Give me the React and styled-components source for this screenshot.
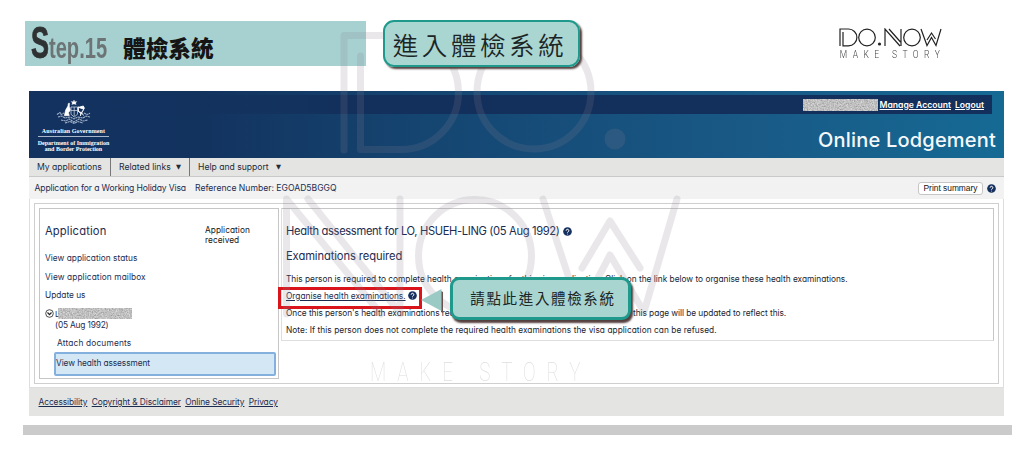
import React from 'react'
import styled, { createGlobalStyle } from 'styled-components'

const GlobalStyle = createGlobalStyle`
  * {
    box-sizing: border-box;
  }

  body {
    margin: 0;
    background: #fff;
    overflow: hidden;
  }
`

const Page = styled.div`
  position: relative;
  width: 1024px;
  height: 473px;
  overflow: hidden;
  background: #fff;
  color: #1c2c50;
  font-family: Inter, 'Noto Sans CJK TC', sans-serif;
  font-feature-settings: 'cv11';
  font-size: 8.3px;
`

/* Slide heading */

const TopBar = styled.header`
  display: flex;
  align-items: flex-start;
  height: 91px;
  padding: 20px 0 0 25px;
`

const StepTitle = styled.h1`
  display: flex;
  width: 341px;
  height: 45px;
  margin: 1px 0 0;
  padding-left: 6px;
  background: #a7d1d0;
  font-family: 'Liberation Sans', sans-serif;
  line-height: 1;
`

const StepInitial = styled.span`
  width: 18px;
  color: #2f3233;
  font-size: 45px;
  line-height: 43px;
  transform: scaleX(0.6);
  transform-origin: left;
  -webkit-text-stroke: 1px #2f3233;
`

const StepRest = styled.span`
  width: 74px;
  color: #6c7476;
  font-size: 30px;
  line-height: 53px;
  transform: scaleX(0.67);
  transform-origin: left;
`

const StepName = styled.span`
  color: #151515;
  font-family: 'Noto Sans CJK TC', sans-serif;
  font-size: 22.7px;
  font-weight: 900;
  line-height: 53px;
`

const Callout = styled.div`
  display: flex;
  align-items: center;
  justify-content: center;
  border: 2px solid #1f998c;
  background: #a9d5d1;
  color: #1b2526;
  font-family: 'Noto Sans CJK TC', sans-serif;
  white-space: nowrap;
`

const TitleCallout = styled(Callout)`
  position: relative;
  z-index: 1;
  width: 197px;
  height: 47px;
  margin-left: 17px;
  padding-right: 3px;
  border-radius: 11px;
  background: rgba(167, 212, 207, 0.96);
  box-shadow: 2px 2px 2px #54403f;
  font-size: 25.5px;
  font-weight: 350;
  letter-spacing: 3.6px;
`

const Brand = styled.div`
  width: 104px;
  margin: 8px 0 0 258.5px;

  svg {
    display: block;
  }
`

const BrandTag = styled.div`
  margin-top: 1px;
  padding-left: 1px;
  color: #444;
  font-family: Roboto, sans-serif;
  font-size: 10.5px;
  font-weight: 300;
  line-height: 12px;
  letter-spacing: 6.7px;
  white-space: nowrap;
  transform: scaleX(0.81);
  transform-origin: left;
`

/* Lodgement portal */

const Portal = styled.div`
  width: 975px;
  height: 325px;
  margin-left: 29px;
`

const Banner = styled.div`
  display: flex;
  height: 67px;
  background: linear-gradient(90deg, #13325f 0%, #13335f 18%, #154672 42%, #195a87 75%, #156a94 100%);
`

const Emblem = styled.div`
  display: flex;
  flex-direction: column;
  align-items: center;
  width: 89px;
  padding-top: 8px;
  color: #fff;
  font-family: 'Liberation Serif', serif;
  font-weight: 700;
  font-size: 6px;
  line-height: 6px;
  text-align: center;
  white-space: nowrap;

  hr {
    width: 71px;
    height: 1px;
    margin: 2px 0 3px;
    border: 0;
    background: #a9b7cc;
  }
`

const EmblemName = styled.div`
  margin-top: 2px;
  letter-spacing: 0.1px;
`

const BannerMain = styled.div`
  flex: 1;
  display: flex;
  flex-direction: column;
  padding-top: 4px;
`

const AccountBar = styled.div`
  display: flex;
  align-items: center;
  justify-content: flex-end;
  height: 19px;
  margin-right: 12px;
  padding-right: 8px;
  background: linear-gradient(90deg, rgba(19, 48, 92, 0), #13305c 25%);
`

const AccountLink = styled.a`
  margin-left: ${p => p.$gap}px;
  color: #fff;
  font-size: 8.6px;
  font-weight: 600;
  line-height: 10px;
  text-decoration: underline;
`

const ServiceName = styled.div`
  padding: 10px 8px 0 0;
  color: #f5f8fa;
  font-size: 20px;
  font-weight: 500;
  line-height: 32px;
  letter-spacing: 0.2px;
  text-align: right;
`

const Menu = styled.nav`
  display: flex;
  height: 19px;
  border-bottom: 1px solid #c9c9c9;
  background: #e4e4e2;
`

const MenuItem = styled.div`
  display: flex;
  justify-content: space-between;
  width: ${p => p.$width}px;
  padding: 0 8px;
  border-right: ${p => (p.$last ? '0' : '1px solid #777')};
  color: #222b3b;
  font-size: 8.6px;
  line-height: 18px;
  white-space: nowrap;

  i {
    font-family: 'DejaVu Sans', sans-serif;
    font-size: 6.5px;
    font-style: normal;
    line-height: 19px;
  }
`

const Reference = styled.div`
  display: flex;
  align-items: center;
  height: 22px;
  padding: 0 8px 0 5.5px;
  background: #f2f2f2;
  font-size: 8.6px;
  white-space: nowrap;
`

const RefText = styled.span`
  width: ${p => p.$width}px;
  letter-spacing: ${p => p.$track || 0}px;
`

const PrintButton = styled.button`
  width: 65px;
  height: 13px;
  margin: 0 4px 0 auto;
  padding: 0;
  border: 1px solid #c6c6c6;
  border-radius: 3px;
  background: #fff;
  color: #111;
  font-family: 'Liberation Sans', sans-serif;
  font-size: 8.4px;
  line-height: 11px;
`

const Content = styled.div`
  height: 189px;
  padding: 4px 4px 0;
  border: solid #dedede;
  border-width: 0 1px 1px;
`

const Frame = styled.div`
  display: flex;
  height: 181px;
  padding: 4px;
  border: 1px solid #cfcfcf;
`

const Sidebar = styled.aside`
  width: 240px;
  height: 171px;
  padding: 12px 2px 0 5px;
  border: 1px solid #c6c6c6;
`

const SideHead = styled.div`
  display: flex;
  height: 28px;
`

const Heading = styled.h2`
  margin: 0;
  font-size: 11.2px;
  font-weight: 400;
  line-height: 20px;
  letter-spacing: ${p => p.$track || 0}px;
  white-space: nowrap;
`

const Status = styled.div`
  width: 71px;
  margin-left: auto;
  padding: 4px 0 0;
  color: #151515;
  line-height: 10.3px;
  letter-spacing: 0.05px;
`

const SideLink = styled.div`
  height: ${p => p.$height || 18.7}px;
  padding-left: ${p => p.$indent || 0}px;
  line-height: ${p => p.$height || 18.7}px;
  letter-spacing: ${p => p.$track || 0}px;
  white-space: nowrap;
`

const Person = styled.div`
  display: flex;
  align-items: center;
  height: 17px;

  svg {
    flex: none;
  }

  span {
    width: 3px;
    margin-left: 1px;
    font-size: 8px;
    letter-spacing: -1px;
  }
`

const Selected = styled.div`
  width: 222px;
  height: 24px;
  margin: -5px 0 0 9px;
  border: 2px solid #83b0dd;
  border-radius: 2px;
  background: #d3e8f4;
  line-height: 19px;
  letter-spacing: -0.08px;
`

const Detail = styled.main`
  width: 714px;
  height: 133px;
  margin-left: 2px;
  padding: 12px 0 0 4px;
  border: 1px solid #c6c6c6;
  border-bottom-color: #dedede;
  border-left-color: #dedede;
`

const DetailLine = styled.p`
  display: flex;
  align-items: center;
  height: 17.2px;
  margin: 0;
  color: #20242f;
  letter-spacing: ${p => p.$track || 0}px;
  white-space: nowrap;

  a {
    color: #1c2c50;
    text-decoration: underline;
  }
`

const TitleLine = styled.div`
  display: flex;
  align-items: center;
  gap: 3px;
  height: ${p => p.$height}px;
`

const Footer = styled.footer`
  display: flex;
  align-items: center;
  gap: 4.3px;
  height: 28px;
  padding-left: 9.5px;
  background: #e4e4e2;
  font-size: 8.4px;
  letter-spacing: -0.08px;

  a {
    text-decoration: underline;
    white-space: nowrap;
  }
`

const BottomRule = styled.div`
  width: 989px;
  height: 10px;
  margin: 9px 0 0 23px;
  background: #cbcbcb;
`

/* Annotations laid over the portal */

const Watermark = styled.div`
  position: absolute;
  inset: 0;
  pointer-events: none;
`

const WatermarkTag = styled.div`
  position: absolute;
  top: 359px;
  left: 370px;
  color: #dedede;
  font-family: Roboto, sans-serif;
  font-size: 26px;
  font-weight: 100;
  line-height: 26px;
  letter-spacing: 15px;
  white-space: nowrap;
  transform: scaleX(0.725);
  transform-origin: left;
`

const RedBox = styled.div`
  position: absolute;
  top: 287px;
  left: 278px;
  width: 144px;
  height: 22px;
  border: 3px solid #d9141b;
`

const Pointer = styled.svg`
  position: absolute;
  top: 286px;
  left: 418px;
`

const LinkCallout = styled(Callout)`
  position: absolute;
  top: 277px;
  left: 450px;
  width: 181px;
  height: 43px;
  padding: 0 0 2px 5px;
  border-width: 3px;
  border-radius: 9px;
  box-shadow: 2px 3px 2px #54403f;
  font-size: 14.5px;
  letter-spacing: 1.65px;
`

const Help = ({ size = 9 }) => (
  <svg width={size} height={size} viewBox='0 0 10 10'>
    <circle cx='5' cy='5' r='4.8' fill='#16305f' />
    <path d='M3.5 4.1a1.5 1.5 0 1 1 2.3 1.2q-.8.4-.8 1.1M5 7.5v.7' fill='none' stroke='#fff' strokeWidth='1.1' />
  </svg>
)

const Redacted = ({ width, height }) => (
  <svg width={width} height={height}>
    <filter id={`grain${width}`} x='0' y='0' width='100%' height='100%' colorInterpolationFilters='sRGB'>
      <feTurbulence type='fractalNoise' baseFrequency='0.7' numOctaves='2' seed='4' />
      <feColorMatrix values='.4 0 0 0 .55  .4 0 0 0 .55  .4 0 0 0 .55  0 0 0 0 1' />
    </filter>
    <rect width={width} height={height} filter={`url(#grain${width})`} />
  </svg>
)

const Crest = () => (
  <svg width='36' height='27' viewBox='0 0 36 27' fill='none' stroke='#fff'>
    <path d='M18 1l.8 1.8 2-.3-1.2 1.6.6 1.5-2.2-.7-2.2.7.6-1.5-1.2-1.6 2 .3z' fill='#fff' strokeWidth='.3' />
    <path d='M13.5 4.2l-1.2.2-.4 2.7-2.3 4-1.3 5.6h5l-.8-3 2-2.8-1.2-3.6z' fill='#fff' strokeWidth='.6' />
    <path d='M28.5 9.5l-1.2-2.5-3.6 1-2 .2.3 4 2.7 1.8-.2 3M25.5 13.5l2 3M22.3 8.2l5.4 2-2.2 3.5-3-1.2z' fill='#fff' strokeWidth='.9' />
    <path d='M15 8h6.5v7.3L18.2 18 15 15.3zM15 11.5h6.5M18.2 8v9' stroke='#c6d0df' strokeWidth='.8' />
    <path d='M1 15.5l3-2 1 2 3-1.5M2 18l4-1 3 2 5-1 4 2 4-2 5 1 3-2 4 1M28 14l3 1.5 3-1.2M5 21l5 1 3-2 5 3 5-3 4 2 5-1M9 24l5-1.5 4 2 4-2 5 1.5' stroke='#a2b2c9' strokeWidth='1.1' strokeDasharray='2.2 .5' />
  </svg>
)

const BrandMark = () => (
  <svg width='103' height='20' viewBox='0 0 103 20' fill='none' stroke='#222' strokeWidth='1.2' role='img' aria-label='DO.NOW'>
    <path d='M1 18V1H9.5a8.3 8.3 0 0 1 0 16.8H4V4' />
    <circle cx='28' cy='9.5' r='8.3' />
    <circle cx='40.5' cy='16' r='1.6' fill='#222' stroke='none' />
    <path d='M46 18V1L61 18M50 1L61.5 14M62 1V18' />
    <circle cx='73' cy='9.5' r='8.3' />
    <path d='M82 1L88 17.5 92.5 9.5 97 17.5 102 1M88 12L92.5 5 96.5 11' />
  </svg>
)

/* Same monogram, split over two rows */
const WatermarkMark = () => (
  <svg
    width='1024'
    height='473'
    fill='none'
    stroke='#898091'
    strokeWidth='7'
    strokeLinecap='round'
    strokeLinejoin='round'
    opacity='0.18'
  >
    <path d='M344 150V35.5H401.5a57 57 0 0 1 0 114H360.5V56' />
    <circle cx='534' cy='92' r='57' />
    <circle cx='615' cy='139' r='10.5' fill='#898091' stroke='none' />
    <path d='M286.5 314V199L381 314M308 199L400 313M400 199V314' />
    <circle cx='475' cy='256' r='56.5' />
    <path d='M543 199L580 312 610 255 644 312 677 199M582 268L610 221 640 268' />
  </svg>
)

const App = () => {
  return (
    <Page>
      <GlobalStyle />
      <TopBar>
        <StepTitle>
          <StepInitial>S</StepInitial>
          <StepRest>tep.15</StepRest>
          <StepName>體檢系統</StepName>
        </StepTitle>
        <TitleCallout>進入體檢系統</TitleCallout>
        <Brand>
          <BrandMark />
          <BrandTag>MAKE STORY</BrandTag>
        </Brand>
      </TopBar>

      <Portal>
        <Banner>
          <Emblem>
            <Crest />
            <EmblemName>Australian Government</EmblemName>
            <hr />
            <div>Department of Immigration</div>
            <div>and Border Protection</div>
          </Emblem>
          <BannerMain>
            <AccountBar>
              <Redacted width={75} height={12} />
              <AccountLink $gap={2}>Manage Account</AccountLink>
              <AccountLink $gap={4}>Logout</AccountLink>
            </AccountBar>
            <ServiceName>Online Lodgement</ServiceName>
          </BannerMain>
        </Banner>

        <Menu>
          <MenuItem $width={82}>My applications</MenuItem>
          <MenuItem $width={79}>Related links <i>▼</i></MenuItem>
          <MenuItem $width={99} $last>Help and support <i>▼</i></MenuItem>
        </Menu>

        <Reference>
          <RefText $width={160.5} $track={-0.15}>Application for a Working Holiday Visa</RefText>
          <RefText $width={150}>Reference Number: EGOAD5BGGQ</RefText>
          <PrintButton>Print summary</PrintButton>
          <Help />
        </Reference>

        <Content>
          <Frame>
            <Sidebar>
              <SideHead>
                <Heading $track={0.15}>Application</Heading>
                <Status>Application received</Status>
              </SideHead>
              <SideLink $track={0.03}>View application status</SideLink>
              <SideLink $track={0.1}>View application mailbox</SideLink>
              <SideLink>Update us</SideLink>
              <Person>
                <svg width='9' height='9' viewBox='0 0 9 9' fill='none' stroke='#222'>
                  <circle cx='4.5' cy='4.5' r='3.8' strokeWidth='.8' />
                  <path d='M2.5 3.5l2 2.2 2-2.2' strokeWidth='1.2' />
                </svg>
                <span>L</span>
                <Redacted width={74} height={11} />
              </Person>
              <SideLink $height={7} $indent={10} $track={-0.15}>(05 Aug 1992)</SideLink>
              <SideLink $height={28} $indent={12} $track={0.18}>Attach documents</SideLink>
              <Selected>View health assessment</Selected>
            </Sidebar>
            <Detail>
              <TitleLine $height={20}>
                <Heading $track={-0.35}>Health assessment for LO, HSUEH-LING (05 Aug 1992)</Heading>
                <Help />
              </TitleLine>
              <TitleLine $height={29}>
                <Heading $track={-0.1}>Examinations required</Heading>
              </TitleLine>
              <DetailLine>
                This person is required to complete health examinations for this visa application. Click on the link below to organise these health examinations.
              </DetailLine>
              <DetailLine>
                <a>Organise health examinations.</a>&nbsp;<Help />
              </DetailLine>
              <DetailLine $track={-0.045}>
                Once this person's health examinations requirements have been received and assessed, this page will be updated to reflect this.
              </DetailLine>
              <DetailLine $track={0.055}>
                Note: If this person does not complete the required health examinations the visa application can be refused.
              </DetailLine>
            </Detail>
          </Frame>
        </Content>

        <Footer>
          <a>Accessibility</a>
          <a>Copyright &amp; Disclaimer</a>
          <a>Online Security</a>
          <a>Privacy</a>
        </Footer>
      </Portal>
      <BottomRule />

      <RedBox />
      <Watermark>
        <WatermarkMark />
        <WatermarkTag>MAKE STORY</WatermarkTag>
      </Watermark>
      <Pointer width='28' height='30'>
        <path d='M23 5l2 1v21l-2-1z' fill='#6b5050' />
        <path d='M3 14L23.5 3V25z' fill='#9bcac5' />
      </Pointer>
      <LinkCallout>請點此進入體檢系統</LinkCallout>
    </Page>
  )
}

export default App
